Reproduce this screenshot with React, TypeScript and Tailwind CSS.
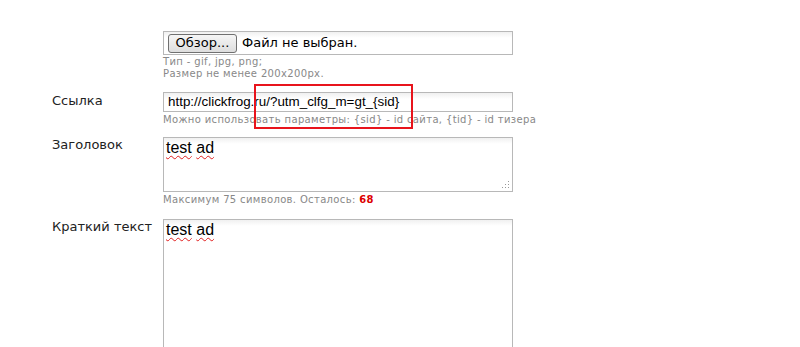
import React from "react";

const LABEL = "w-[111px] shrink-0 text-[13px] leading-4 text-[#222] [font-family:'DejaVu_Sans',Verdana,sans-serif]";
const HINT = "text-[10px] leading-3 tracking-[0.35px] text-[#888] [font-family:'DejaVu_Sans',Verdana,sans-serif]";
const FIELD = "border border-[#b8b8b8] bg-[linear-gradient(#f0f0f0,#fff_6px)] [font-family:'Liberation_Sans',Arial,sans-serif] text-black";

function Squiggle({ children }: { children: React.ReactNode }) {
  return <span className="underline decoration-wavy decoration-[#e02020] decoration-1 underline-offset-2">{children}</span>;
}

function Grip() {
  return (
    <svg className="absolute bottom-[2px] right-[2px]" width="8" height="8" viewBox="0 0 8 8">
      <rect x="6" y="0" width="1" height="1" fill="#999" />
      <rect x="3" y="3" width="1" height="1" fill="#999" />
      <rect x="6" y="3" width="1" height="1" fill="#999" />
      <rect x="0" y="6" width="1" height="1" fill="#999" />
      <rect x="3" y="6" width="1" height="1" fill="#999" />
      <rect x="6" y="6" width="1" height="1" fill="#999" />
    </svg>
  );
}

export default function App() {
  return (
    <div className="h-[347px] w-[800px] overflow-hidden bg-white pl-[52px] pt-[31px]">
      {/* image upload */}
      <div className="flex">
        <div className="w-[111px] shrink-0" />
        <div>
          <div className={`flex h-[24px] w-[350px] items-center pl-[4px] ${FIELD}`}>
            <div className="flex h-[19px] w-[69px] items-center justify-center rounded-[3px] border border-[#707070] bg-[linear-gradient(#f6f6f6,#dddddd)] text-[13px] text-black [font-family:'DejaVu_Sans',Tahoma,sans-serif]">
              Обзор...
            </div>
            <span className="ml-[5px] text-[13px] [font-family:'DejaVu_Sans',Tahoma,sans-serif]">Файл не выбран.</span>
          </div>
          <p className={`mt-[1px] ${HINT}`}>Тип - gif, jpg, png;</p>
          <p className={HINT}>Размер не менее 200x200px.</p>
        </div>
      </div>

      {/* link */}
      <div className="mt-[12px] flex">
        <div className={`${LABEL} pt-[1px]`}>Ссылка</div>
        <div className="relative">
          <div className={`flex h-[20px] w-[350px] items-center pl-[4px] text-[13.4px] ${FIELD}`}>
            http://clickfrog.ru/?utm_clfg_m=gt_{"{sid}"}
          </div>
          <p className={`mt-[2px] whitespace-nowrap ${HINT}`}>Можно использовать параметры: {"{sid}"} - id сайта, {"{tid}"} - id тизера</p>
          <div className="absolute left-[91px] top-[-8px] h-[45px] w-[159px] border-2 border-[#e8141c]" />
        </div>
      </div>

      {/* title */}
      <div className="mt-[11px] flex">
        <div className={LABEL}>Заголовок</div>
        <div>
          <div className={`relative h-[55px] w-[350px] px-[2px] text-[16px] leading-[20px] ${FIELD}`}>
            <Squiggle>test</Squiggle> <Squiggle>ad</Squiggle>
            <Grip />
          </div>
          <p className={`mt-[2px] ${HINT}`}>
            Максимум 75 символов. Осталось: <b className="text-[#d00]">68</b>
          </p>
        </div>
      </div>

      {/* short text */}
      <div className="mt-[13px] flex">
        <div className={LABEL}>Краткий текст</div>
        <div className={`h-[160px] w-[350px] px-[2px] text-[16px] leading-[20px] ${FIELD}`}>
          <Squiggle>test</Squiggle> <Squiggle>ad</Squiggle>
        </div>
      </div>
    </div>
  );
}
